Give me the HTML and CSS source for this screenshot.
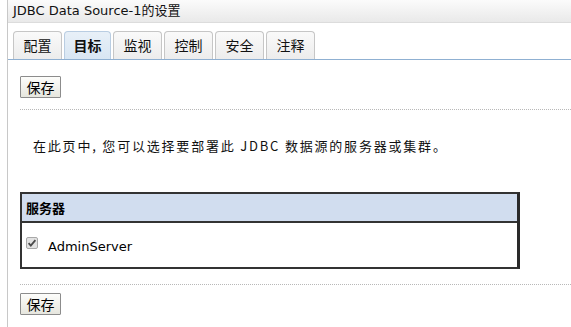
FILE: index.html
```html
<!DOCTYPE html>
<html>
<head>
<meta charset="utf-8">
<link rel="stylesheet" href="styles.css">
</head>
<body>
<div class="page">
  <div class="titlebar">JDBC Data Source-1的设置</div>
  <div class="tabs">
    <div class="tab">配置</div>
    <div class="tab active">目标</div>
    <div class="tab">监视</div>
    <div class="tab">控制</div>
    <div class="tab">安全</div>
    <div class="tab">注释</div>
  </div>
  <div class="content">
    <div class="btnrow"><button class="btn">保存</button></div>
    <div class="sep"></div>
    <p class="intro">在此页中, 您可以选择要部署此 JDBC 数据源的服务器或集群。</p>
    <div class="table">
      <div class="thead">服务器</div>
      <div class="tbody">
        <span class="check"><svg width="12" height="12" viewBox="0 0 12 12"><rect x="0.5" y="0.5" width="11" height="11" rx="1.5" fill="#e2e2e2" stroke="#a8a8a8"/><path d="M2.6 6.2 L4.8 8.6 L9.4 3.2" fill="none" stroke="#4a4a4a" stroke-width="1.8"/></svg></span>
        <span class="server">AdminServer</span>
      </div>
    </div>
    <div class="sep sep2"></div>
    <div class="btnrow"><button class="btn">保存</button></div>
  </div>
</div>
</body>
</html>
```

FILE: styles.css
```css
html, body {
  margin: 0;
  padding: 0;
  background: #fff;
}
body {
  font-family: "DejaVu Sans", "Noto Sans CJK SC", sans-serif;
  color: #000;
}
.page {
  margin-left: 7px;
  border-left: 1px solid #c8c8c8;
  height: 327px;
  box-sizing: border-box;
}
.titlebar {
  height: 23px;
  box-sizing: border-box;
  border-bottom: 1px solid #dcdcdc;
  background: linear-gradient(#fbfbfb, #e9e9e9);
  font-family: "DejaVu Sans", "Noto Sans CJK SC", sans-serif;
  font-size: 13px;
  line-height: 22px;
  padding-left: 5px;
  color: #111;
}
.tabs {
  display: flex;
  gap: 2px;
  margin-top: 8px;
  padding-left: 5px;
  border-bottom: 1px solid #8fb0d2;
  height: 28px;
}
.tab {
  width: 49px;
  box-sizing: border-box;
  height: 28px;
  border: 1px solid #c6c6c6;
  border-bottom: none;
  border-radius: 4px 4px 0 0;
  background: linear-gradient(#fafafa, #ececec);
  font-family: "Noto Sans CJK SC", sans-serif;
  font-size: 14px;
  line-height: 27px;
  text-align: center;
  color: #111;
}
.tab.active {
  width: 47px;
  background: linear-gradient(#e8f0f8, #d8e6f3);
  border-color: #b9cde2;
  font-weight: bold;
}
.content {
  padding-left: 12px;
}
.btnrow {
  padding-top: 16px;
}
.btn {
  display: block;
  margin: 0;
  padding: 0;
  width: 41px;
  height: 22px;
  box-sizing: border-box;
  border: 1px solid #8c8c8c;
  border-radius: 1px;
  background: linear-gradient(#fdfdfb, #e6e6de);
  font-family: "Noto Sans CJK SC", sans-serif;
  font-size: 14px;
  line-height: 20px;
  color: #000;
}
.sep {
  margin-top: 11px;
  border-top: 1px dotted #b8b8b8;
}
.intro {
  margin: 27px 0 0 13px;
  font-family: "Noto Sans CJK SC", sans-serif;
  font-size: 13px;
  letter-spacing: 1.8px;
  line-height: 18px;
  color: #111;
}
.table {
  margin-top: 37px;
  width: 500px;
  box-sizing: border-box;
  border: 2px solid #333;
  border-right: 3px solid #2a2a2a;
}
.thead {
  height: 29px;
  box-sizing: border-box;
  background: #d1ddef;
  border-bottom: 2px solid #333;
  font-family: "Noto Sans CJK SC", sans-serif;
  font-weight: bold;
  font-size: 13px;
  line-height: 28px;
  padding-left: 4px;
}
.tbody {
  height: 44px;
  display: flex;
  align-items: center;
  padding-left: 4px;
  gap: 10px;
}
.check {
  display: flex;
  margin-top: -5px;
}
.server {
  font-size: 13px;
  font-family: "DejaVu Sans", sans-serif;
  margin-top: 2px;
}
.sep2 {
  margin-top: 15px;
}
.sep2 + .btnrow {
  padding-top: 8px;
}
```
